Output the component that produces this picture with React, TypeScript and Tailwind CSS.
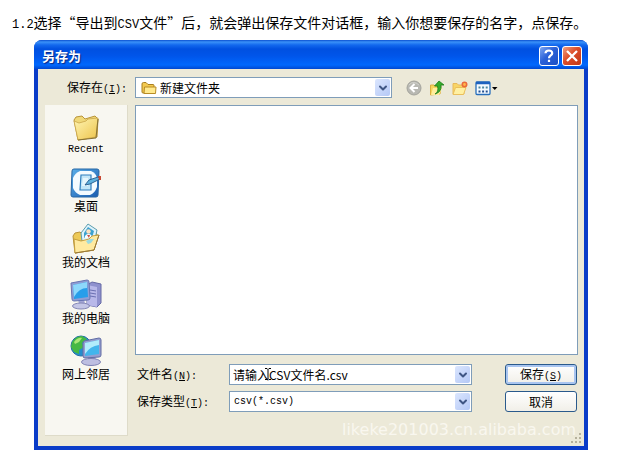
import { useState, type ReactNode } from "react";
import { ChevronDown } from "lucide-react";

const places = [
  { name: "Recent", icon: <RecentIcon />, latin: true },
  { name: "桌面", icon: <DesktopIcon /> },
  { name: "我的文档", icon: <DocumentsIcon /> },
  { name: "我的电脑", icon: <ComputerIcon /> },
  { name: "网上邻居", icon: <NetworkIcon /> },
];

const fieldClass =
  "block h-full w-full appearance-none border border-[#7f9db9] bg-white pr-5 text-[12px] text-black outline-none";

export default function App() {
  const [fileName, setFileName] = useState("请输入CSV文件名.csv");

  return (
    <div lang="zh-CN" className="bg-white pt-3 text-[12px] text-black font-['Noto_Sans_CJK_SC',sans-serif]">
      <p className="h-5 pl-3 text-[14px] leading-5 whitespace-nowrap">
        <Latin large>1.2</Latin>选择“导出到<Latin large>CSV</Latin>文件”后，就会弹出保存文件对话框，输入你想要保存的名字，点保存。
      </p>

      <section aria-label="另存为" className="mt-2 mr-[41px] ml-[34px] overflow-hidden rounded-t-lg bg-[#0842d0]">
        <header className="flex h-[29px] items-center gap-[3px] bg-[linear-gradient(#0a4fd0_0px,#3a91f8_2px,#1268ee_5px,#0050e0_9px,#0055ea_16px,#0068fd_25px,#0048d0_29px)] pt-0.5 pr-1.5 pl-2">
          <h1 className="flex-1 text-[13px] leading-5 font-bold text-white [text-shadow:1px_1px_1px_#0a2a80]">另存为</h1>
          <button aria-label="帮助" className="size-5 rounded-[3px] border border-white bg-[linear-gradient(135deg,#7ea7f2,#2a60d8_45%,#1c4fc4)]">
            <svg viewBox="0 0 18 18" className="size-full" fill="none" stroke="#fff" strokeWidth="2.2">
              <path d="M5.5 6.3C5.6 2.6 12.2 2.6 12.2 6.2C12.2 8.6 9 8.4 9 11.2" />
              <path d="M9 12.8V15" />
            </svg>
          </button>
          <button aria-label="关闭" className="size-5 rounded-[3px] border border-white bg-[linear-gradient(135deg,#f0a080,#dc4c28_45%,#c03818)]">
            <svg viewBox="0 0 18 18" className="size-full" stroke="#fff" strokeWidth="2.3">
              <path d="M4 4L14 14M14 4L4 14" />
            </svg>
          </button>
        </header>

        <div className="relative border-x-4 border-b-4 border-t-0 border-[#0a3cc8] bg-[#ece9d8] pt-2 pr-1.5 pl-[7px]">
          {/* Look in + toolbar */}
          <div className="flex h-[21px] items-center">
            <label htmlFor="folder" className="w-[90px] shrink-0 pr-2 text-right">
              保存在<Shortcut letter="I" />
            </label>
            <Combo className="max-w-[257px] flex-1">
              <select id="folder" className={`${fieldClass} pl-6`}>
                <option>新建文件夹</option>
              </select>
              <svg viewBox="0 0 16 16" className="pointer-events-none absolute top-1/2 left-1.5 size-4 -translate-y-1/2">
                <path d="M1 4Q1 2.5 2.5 2.5H5L7 4.5H12Q13 4.5 13 5.5V13H2Q1 13 1 12Z" fill="#f3c94f" stroke="#a87e20" />
                <path d="M3.5 7H15L14.5 13.5H3Z" fill="#ffe98e" stroke="#b98c25" />
              </svg>
            </Combo>
            <div className="ml-3.5 flex shrink-0 items-center gap-[7px]">
              <button aria-label="后退">
                <svg viewBox="0 0 16 16" className="size-4">
                  <circle cx="8" cy="8" r="7" fill="#b8b8b2" stroke="#a3a39c" />
                  <path d="M3 5Q7 0 13 5" fill="none" stroke="#d2d2cc" />
                  <path d="M8.5 4L4.5 8L8.5 12M5 8H12" fill="none" stroke="#fff" strokeWidth="2" />
                </svg>
              </button>
              <button aria-label="向上一级">
                <svg viewBox="0 0 16 16" className="size-4">
                  <path d="M1.5 5H5L6 6H12L11 14L1.5 15Z" fill="#f6d55b" stroke="#dcae40" />
                  <path d="M4 8H13L10 15H2Z" fill="#ffed9c" />
                  <path d="M6 14Q10 12 8.5 6H5.5L10 1L15 5H12Q13 12 6 14Z" fill="#35ac2b" stroke="#1e7c1a" strokeWidth=".8" />
                </svg>
              </button>
              <button aria-label="新建文件夹">
                <svg viewBox="0 0 16 16" className="size-4">
                  <path d="M1 3.5H5L6.5 5H12V14H1Z" fill="#f8d566" stroke="#e8b95a" />
                  <path d="M3.5 7.5H14L11.5 14.5H1Z" fill="#fff0a2" stroke="#eabf5c" />
                  <circle cx="12.5" cy="4.5" r="2.2" fill="#ffb84c" stroke="#ea6a3c" strokeWidth="1.6" />
                </svg>
              </button>
              <button aria-label="查看">
                <svg viewBox="0 0 23 16" className="h-4 w-[23px]">
                  <rect x="1" y="2" width="14" height="12.5" rx="1" fill="#f6fbff" stroke="#276ebb" strokeWidth="1.3" />
                  <path d="M1 3H15" stroke="#1e62bf" strokeWidth="2.5" />
                  <path d="M3.5 7.5H13" stroke="#4d879f" strokeWidth="2" strokeDasharray="2 1.6" />
                  <path d="M3.5 11.5H13" stroke="#214e91" strokeWidth="2" strokeDasharray="2 1.6" />
                  <path d="M17 7H22.5L19.75 10Z" fill="#000" />
                </svg>
              </button>
            </div>
          </div>

          <div className="mt-[7px] flex gap-[7px]">
            <nav className="mb-2.5 flex w-[83px] shrink-0 flex-col gap-2.5 border-r border-b border-[#dedbc9] bg-[#f8f7f1] pt-1.5">
              {places.map((place) => (
                <button key={place.name} className="flex flex-col items-center leading-[14px]">
                  <span className="size-8">{place.icon}</span>
                  {place.latin ? <Latin>{place.name}</Latin> : place.name}
                </button>
              ))}
            </nav>

            <main className="min-w-0 flex-1">
              <div className="h-[250px] border border-[#7f9db9] bg-white" />

              <form className="mt-[9px] flex flex-col gap-1.5" onSubmit={(e) => e.preventDefault()}>
                <div className="flex h-[21px] items-center">
                  <label htmlFor="file-name" className="w-[94px] shrink-0 pl-0.5">
                    文件名<Shortcut letter="N" />
                  </label>
                  <Combo className="flex-1">
                    <input
                      id="file-name"
                      value={fileName}
                      onChange={(e) => setFileName(e.target.value)}
                      className={`${fieldClass} pl-[3px]`}
                    />
                    {/* text cursor resting on the file name */}
                    <svg viewBox="0 0 6 12" className="pointer-events-none absolute top-1 left-9 h-3 w-1.5" fill="none" stroke="#000">
                      <path d="M0 .5H2L3 1.5L4 .5H6M3 1.5V10.5M0 11.5H2L3 10.5L4 11.5H6" />
                    </svg>
                  </Combo>
                  <DialogButton primary>
                    保存<Shortcut letter="S" colon={false} />
                  </DialogButton>
                </div>
                <div className="flex h-[21px] items-center">
                  <label htmlFor="file-type" className="w-[94px] shrink-0 pl-0.5">
                    保存类型<Shortcut letter="T" />
                  </label>
                  <Combo className="flex-1">
                    <select
                      id="file-type"
                      className="block h-full w-full appearance-none border border-[#7f9db9] bg-white pr-5 pl-1 text-[10px] text-black outline-none font-['Liberation_Mono',monospace]"
                    >
                      <option>csv(*.csv)</option>
                    </select>
                  </Combo>
                  <DialogButton>取消</DialogButton>
                </div>
              </form>

              <p className="mt-1.5 mb-1 pr-0.5 text-right text-[16px] leading-6 whitespace-nowrap text-[#f9f7ef] font-['DejaVu_Sans',sans-serif]">
                likeke201003.cn.alibaba.com
              </p>
            </main>
          </div>

          <svg viewBox="0 0 12 12" className="absolute right-0.5 bottom-0.5 size-3" fill="#b5b19c">
            <path d="M9 1h2v2h-2zM5 5h2v2h-2zM9 5h2v2h-2zM1 9h2v2h-2zM5 9h2v2h-2zM9 9h2v2h-2z" />
          </svg>
        </div>
      </section>
    </div>
  );
}

function Latin({ children, large }: { children: ReactNode; large?: boolean }) {
  return (
    <span className={large ? "text-[12px] font-['Liberation_Mono',monospace]" : "text-[10px] font-['Liberation_Mono',monospace]"}>
      {children}
    </span>
  );
}

function Shortcut({ letter, colon = true }: { letter: string; colon?: boolean }) {
  return (
    <Latin>
      (<u>{letter}</u>){colon && ":"}
    </Latin>
  );
}

function Combo({ children, className }: { children: ReactNode; className: string }) {
  return (
    <div className={`relative h-full min-w-0 ${className}`}>
      {children}
      <span className="pointer-events-none absolute inset-y-0.5 right-0.5 flex w-[15px] items-center justify-center rounded-[2px] bg-[linear-gradient(135deg,#dbe6fe,#b4c8f6)]">
        <ChevronDown className="size-3 text-[#3f5684]" strokeWidth={4} />
      </span>
    </div>
  );
}

function DialogButton({ children, primary }: { children: ReactNode; primary?: boolean }) {
  return (
    <button
      type={primary ? "submit" : "button"}
      className={`mr-px ml-[33px] h-full w-[72px] shrink-0 rounded-[3px] border border-[#2a5a8c] bg-linear-to-b from-white to-[#f1efe8] ${
        primary ? "shadow-[inset_0_0_0_2px_#a9c5f0]" : ""
      }`}
    >
      {children}
    </button>
  );
}

function RecentIcon() {
  return (
    <svg viewBox="0 0 32 32" className="size-8">
      <defs>
        <linearGradient id="folder-front" x1="0" y1="0" x2="1" y2="1">
          <stop stopColor="#fff5b4" />
          <stop offset="1" stopColor="#edc44b" />
        </linearGradient>
      </defs>
      <path d="M4 9L6 6L12 5L15 8L25 5L28 8L27 26L8 29Z" fill="#f0d878" stroke="#b9953b" />
      <path d="M4 10L9 12L16 10L18 8L28 7L26 26L8 29Z" fill="url(#folder-front)" stroke="#c9a548" strokeWidth=".8" />
      <path d="M8 29L26 27L28 8" fill="none" stroke="#877234" />
    </svg>
  );
}

function DesktopIcon() {
  return (
    <svg viewBox="0 0 32 32" className="size-8">
      <defs>
        <linearGradient id="blotter" x1="0" y1="0" x2="1" y2="1">
          <stop stopColor="#5aaee8" />
          <stop offset="1" stopColor="#1a5cb0" />
        </linearGradient>
      </defs>
      <path d="M4 2H27Q29 2 29 4L28 28Q28 30 26 30H3Q1 30 1 28L2 4Q2 2 4 2Z" fill="url(#blotter)" stroke="#2766a4" />
      <path d="M10 4H21Q26 6 27 11V20Q25 26 20 28H10Q5 26 3 21V11Q5 6 10 4Z" fill="#f4fbff" />
      <path d="M11 8H21V23H10Z" fill="#c3e6f8" stroke="#2f7fbe" strokeWidth="1.2" />
      <path d="M13 11H18V19H12Z" fill="#e6f6fd" />
      <path d="M15 18L19 13L28 10L30 12L20 17Z" fill="#5fb2df" stroke="#24588a" strokeWidth=".9" />
      <path d="M28 9L31 9L31 13L29 13Z" fill="#c94a35" />
    </svg>
  );
}

function DocumentsIcon() {
  return (
    <svg viewBox="0 0 32 32" className="size-8">
      <path d="M3 13L5 10L10 9L13 12L25 8L28 13L24 27L5 30Z" fill="#edc957" stroke="#b8923a" />
      <path d="M11 10L18 1L27 7L24 21L12 18Z" fill="#dff3fb" stroke="#5c9dad" />
      <path d="M14 10L18 4L24 8L22 15H14Z" fill="#3da2cf" />
      <circle cx="18.5" cy="8.5" r="2.2" fill="#ffe1c0" />
      <path d="M14.5 15Q15 11 18.5 11Q22 11 22 15Z" fill="#f9fcff" />
      <path d="M17 12L19 15L20 12Z" fill="#c85245" />
      <path d="M4 16L11 18L19 16L22 13L29 12L24 27L5 30Z" fill="#ffeaa0" stroke="#c59f3e" />
      <path d="M16 18L20 16L24 16L21 20L18 21Z" fill="#9bdae0" />
      <path d="M5 30L24 27L29 12" fill="none" stroke="#98783a" />
    </svg>
  );
}

function ComputerIcon() {
  return (
    <svg viewBox="0 0 32 32" className="size-8">
      <path d="M17 6L22 3L31 5V24L27 28L17 26Z" fill="#8f91ce" stroke="#666aa5" />
      <path d="M17 6L27 8V28L17 26Z" fill="#b8b8e9" />
      <path d="M20 11L26 12M20 14L26 15M20 17L26 18" stroke="#6a70b2" />
      <path d="M8 20H14L15 25H9Z" fill="#a2a5d5" />
      <ellipse cx="11" cy="27" rx="8.5" ry="3" fill="#c4c6e6" stroke="#8487b6" />
      <path d="M1 4L17 1Q19 1 19 3L20 19Q20 21 18 21L4 22Q2 22 2 20Z" fill="#8f9ed5" stroke="#6874b1" />
      <path d="M3 6L17 3L18 18L4 20Z" fill="#279eea" />
      <path d="M3 6L17 3L17 9Q9 9 4 18Z" fill="#8dd8fb" />
    </svg>
  );
}

function NetworkIcon() {
  return (
    <svg viewBox="0 0 32 32" className="size-8">
      <circle cx="11" cy="11" r="10" fill="#238dcc" stroke="#226ca5" />
      <path d="M2 7Q6 1 12 1L17 4L12 8L14 12L9 15L9 19L4 17L1 12Z" fill="#45b844" />
      <path d="M4 7Q8 2 12 3L9 7L5 9Z" fill="#a9e778" />
      <path d="M18 21L25 20L26 27H18Z" fill="#9295cb" />
      <ellipse cx="21" cy="27" rx="9.5" ry="3.5" fill="#bdbee1" stroke="#7f82b3" />
      <path d="M14 6L29 3Q31 3 31 5V20Q31 22 29 22L15 23Q13 23 13 21V8Z" fill="#959ed0" stroke="#626da4" />
      <path d="M15 8L29 5V19L15 21Z" fill="#42b5ec" />
      <path d="M15 8L29 5V10Q20 11 15 19Z" fill="#b1ecfb" />
    </svg>
  );
}
